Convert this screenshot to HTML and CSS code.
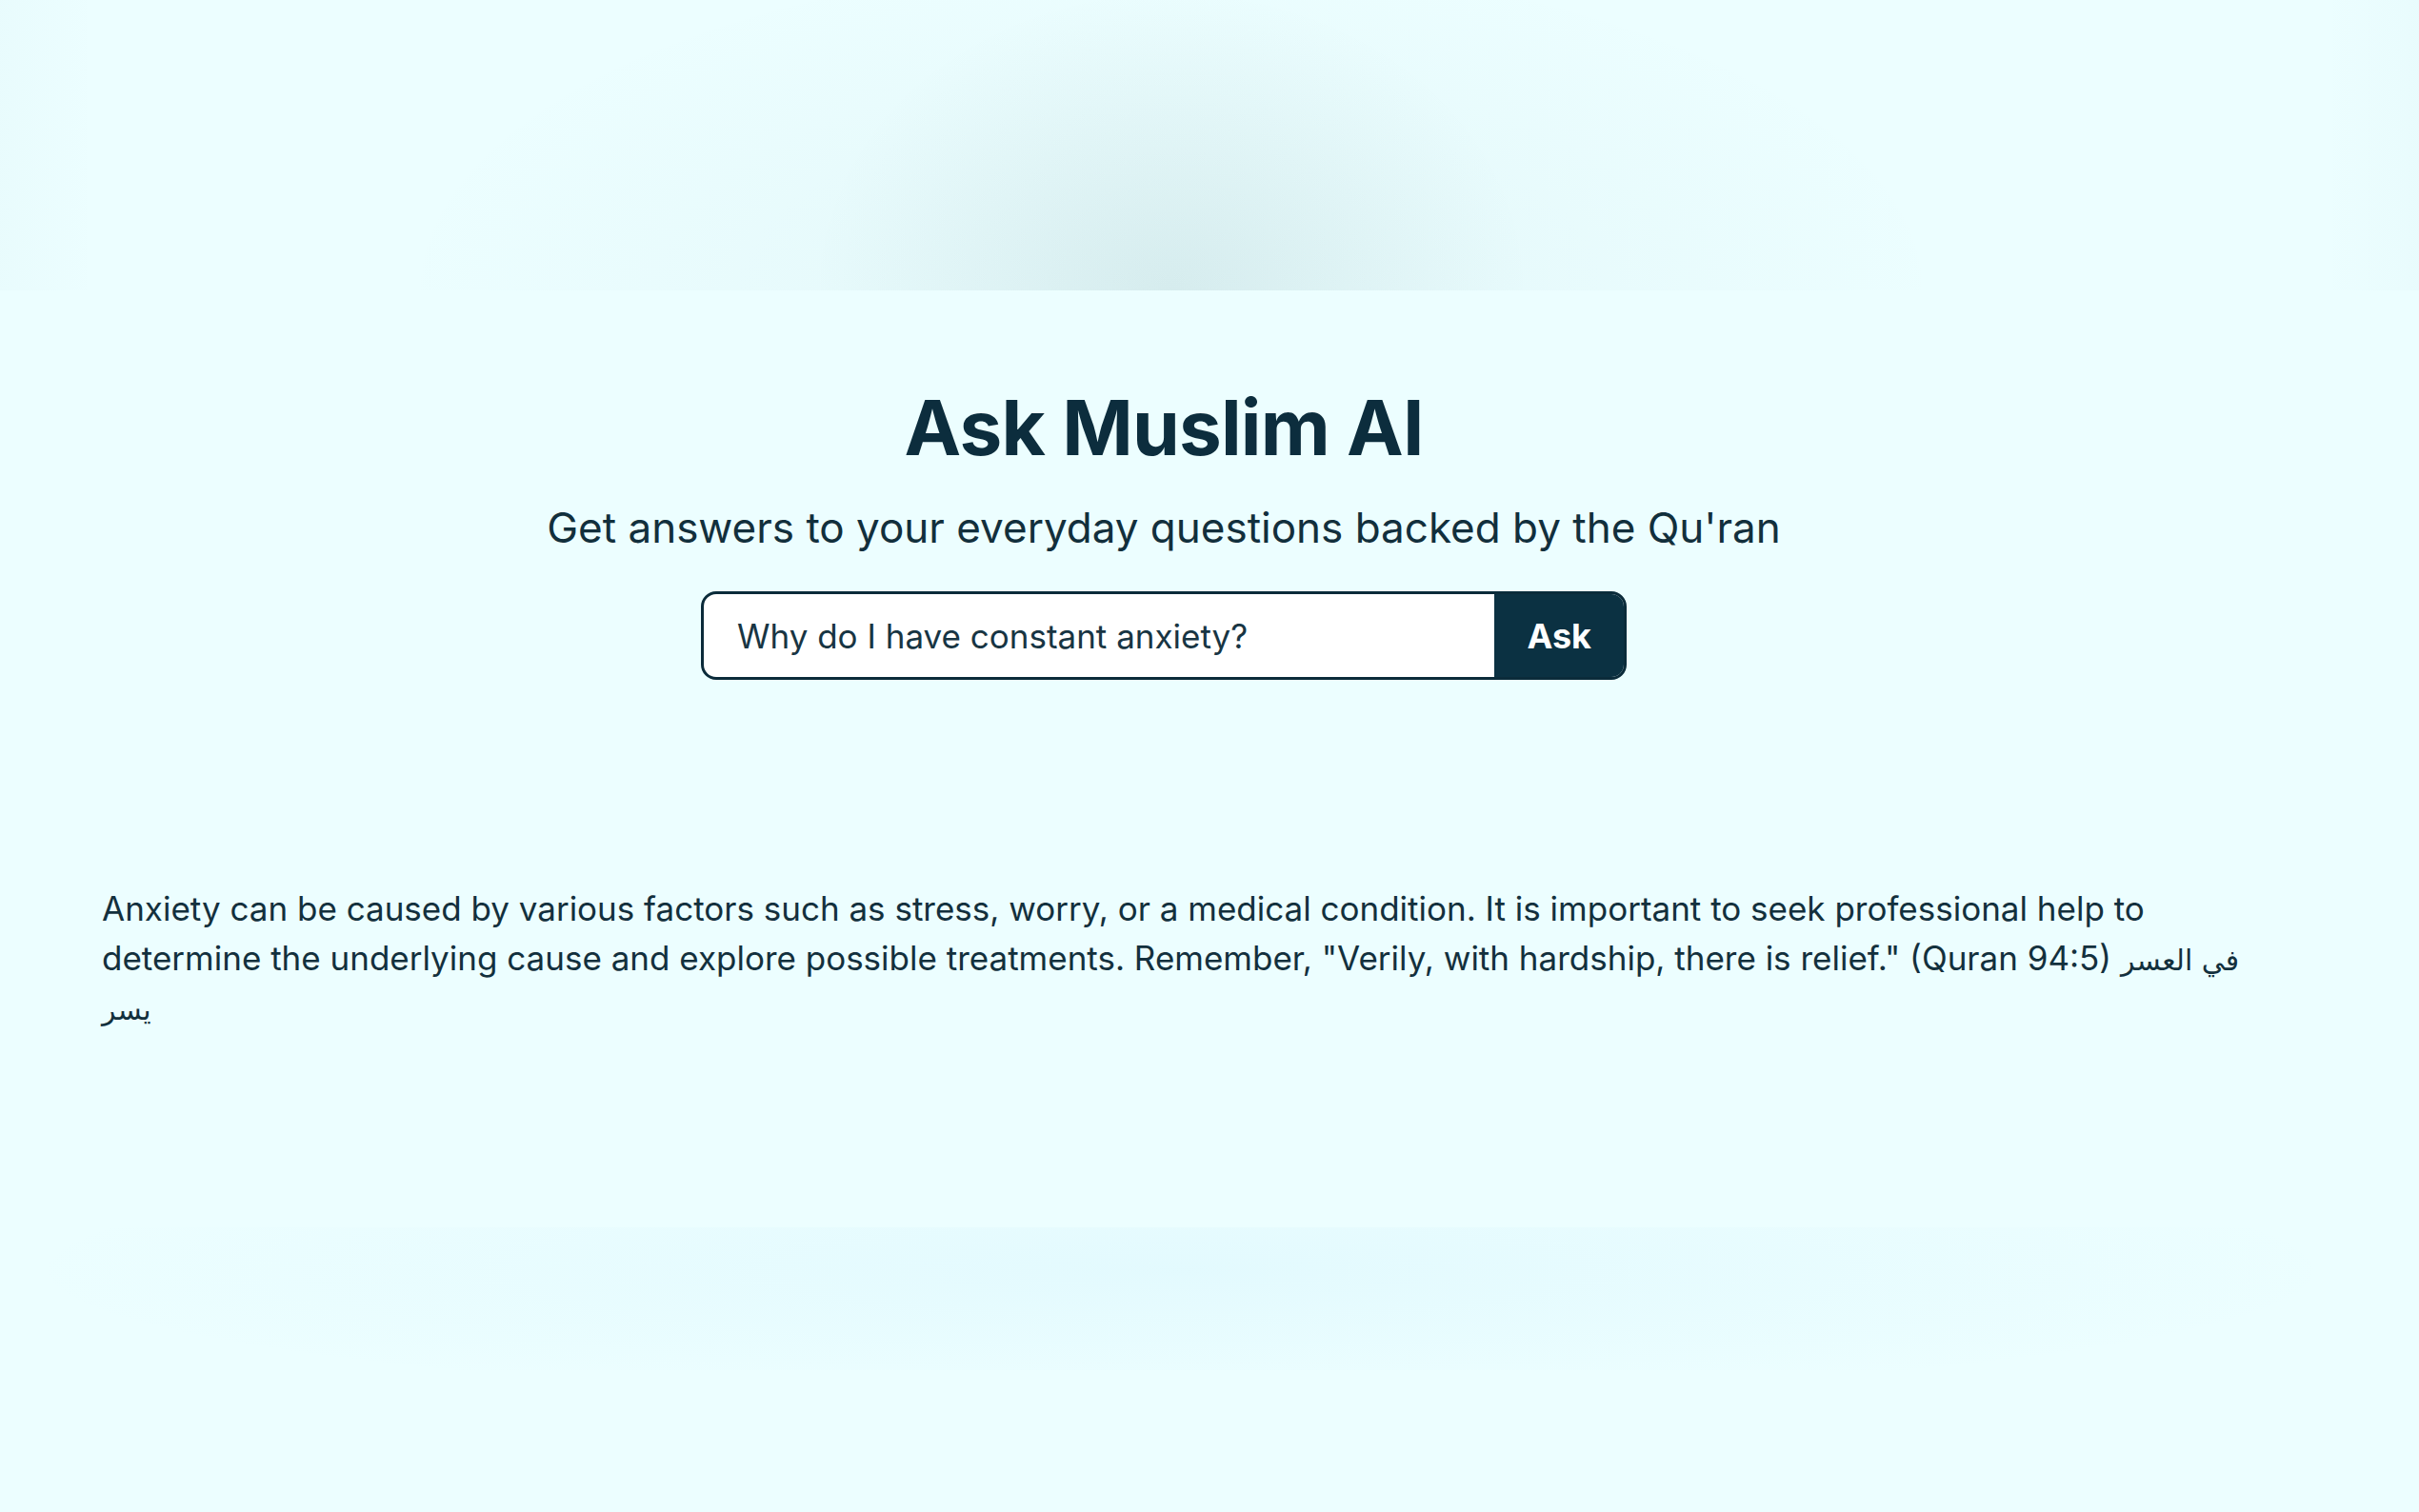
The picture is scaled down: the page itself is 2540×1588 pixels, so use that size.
FILE: index.html
```html
<!DOCTYPE html>
<html lang="en">
<head>
  <meta charset="UTF-8" />
  <title>Ask Muslim AI</title>
  <meta name="viewport" content="width=device-width, initial-scale=1.0"/>
  <link rel="stylesheet" href="styles.css">
</head>
<body>

<div class="top-glow"></div>

<div class="hero">
  <h1>Ask Muslim AI</h1>
  <p class="subtitle">Get answers to your everyday questions backed by the Qu'ran</p>

  <form class="ask-form" onsubmit="return false;">
    <input type="text" id="userQuery" value="Why do I have constant anxiety?" />
    <button type="submit">Ask</button>
  </form>
</div>

<div id="answerText">Anxiety can be caused by various factors such as stress, worry, or a medical condition. It is important to seek professional help to determine the underlying cause and explore possible treatments. Remember, "Verily, with hardship, there is relief." (Quran 94:5) <span class="arabic" lang="ar">في العسر يسر</span></div>

<div class="bottom-glow"></div>

</body>
</html>
```

FILE: styles.css
```css
* {
  box-sizing: border-box;
}

body {
  font-family: 'Inter', 'DejaVu Sans', sans-serif;
  background-color: #ecfeff;
  color: #0f2d3b;
  margin: 0;
  padding: 0;
  min-height: 100vh;
}

.top-glow {
  height: 305px;
  background:
    radial-gradient(ellipse 380px 320px at 1230px 100%, rgba(40, 90, 90, 0.07), transparent),
    radial-gradient(ellipse 820px 360px at 1230px 100%, rgba(60, 120, 140, 0.05), transparent),
    linear-gradient(to right, rgba(60, 120, 140, 0.02), transparent 4%, transparent 96%, rgba(60, 120, 140, 0.02));
}

.hero {
  width: 2444px;
  display: flex;
  flex-direction: column;
  align-items: center;
}

h1 {
  font-size: 80px;
  line-height: 1;
  font-weight: 700;
  letter-spacing: -0.01em;
  color: #0c2d3d;
  margin: 104px 0 0;
}

.subtitle {
  font-size: 44px;
  line-height: 1;
  color: #122f3c;
  margin: 43px 0 0;
}

.ask-form {
  display: flex;
  width: 972px;
  height: 93px;
  margin-top: 45px;
  border: 3px solid #0b2b3a;
  border-radius: 16px;
  overflow: hidden;
  background-color: #ffffff;
}

.ask-form input[type="text"] {
  flex: 1;
  border: none;
  outline: none;
  padding: 0 0 0 35px;
  font-family: inherit;
  font-size: 35px;
  color: #183543;
  background: transparent;
}

.ask-form button {
  border: none;
  background-color: #0b3142;
  color: #ffffff;
  font-family: inherit;
  font-size: 36px;
  font-weight: 700;
  padding: 0 34px;
  cursor: pointer;
}

#answerText {
  margin-top: 214px;
  padding: 0 140px 0 107px;
  font-size: 35px;
  line-height: 52px;
  color: #13303d;
}

.arabic {
  font-family: 'DejaVu Sans', sans-serif;
  font-size: 30px;
  line-height: 1;
}

.bottom-glow {
  height: 150px;
  margin-top: 205px;
  background: radial-gradient(ellipse 1220px 140px at 1240px 30%, rgba(120, 200, 240, 0.08), transparent);
}
```
